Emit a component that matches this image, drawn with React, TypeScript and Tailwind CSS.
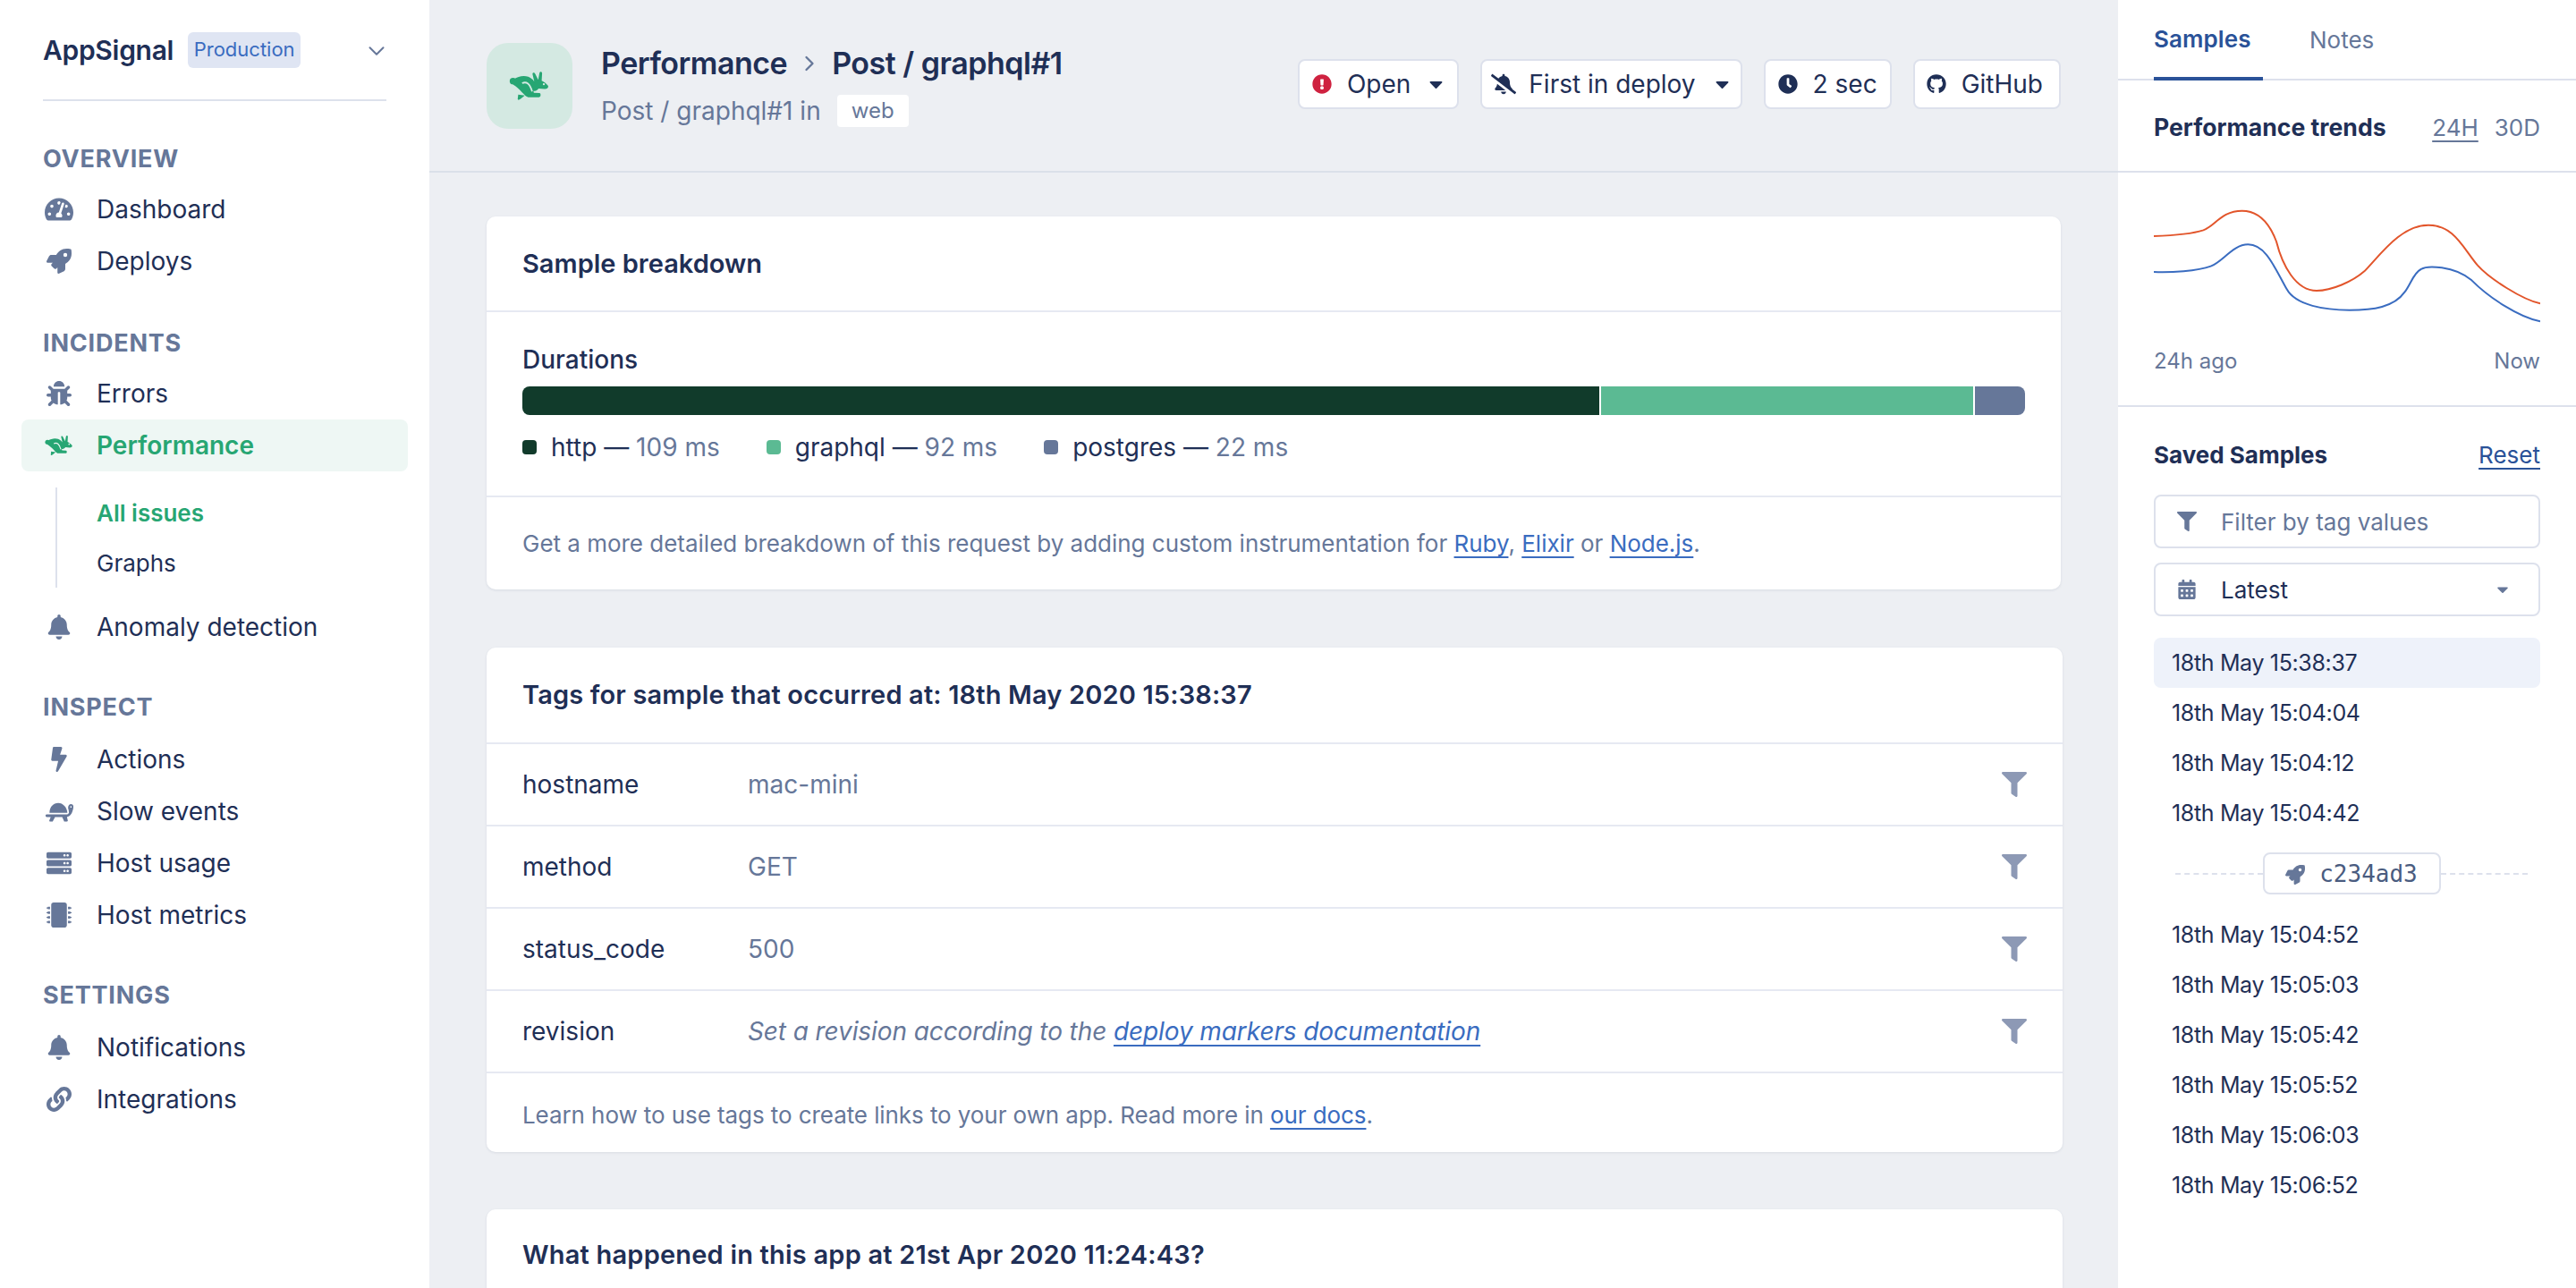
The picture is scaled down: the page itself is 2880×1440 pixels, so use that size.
import type { ReactNode } from "react";
import {
  FaBell,
  FaBellSlash,
  FaBolt,
  FaBug,
  FaCalendarAlt,
  FaCaretDown,
  FaClock,
  FaExclamationCircle,
  FaFilter,
  FaGithub,
  FaLink,
  FaMicrochip,
  FaRocket,
  FaServer,
  FaTachometerAlt,
} from "react-icons/fa";
import { FiChevronDown, FiChevronRight } from "react-icons/fi";

function RabbitIcon({ className, slit }: { className: string; slit: string }) {
  return (
    <svg viewBox="9 11 47 35" className={className} fill="currentColor">
      <circle cx="13.5" cy="23" r="3.8" />
      <path d="M15 20.5C19 17.5 26 16 31 18C34 19 36 21 38 23.5L36 15C35.700 13 38 12.500 39 14.500L42.500 21.500L44 13.500C44.500 11.500 47 12 47 14L46.500 22.500C49 24 52 25.500 54 28.500C54.500 30.500 53 32 50 32L43 31.500C41.500 33.500 39.500 34.500 37 34.500L37.500 36.500L44 36.800C45.800 37 45.800 41.500 43.500 41.500L31 41.500C28.500 41.500 25 37 21 33C18 30 15 28 13 26.500Z" />
      <path d="M19.500 38.500L27 39.500C25 41 23 43 20.500 44.500C19.500 45 18.500 44 19 43Z" />
      <path
        d="M24 25.500C29 23 33 26 35.500 35"
        fill="none"
        stroke={slit}
        strokeWidth="1.800"
      />
      <circle cx="49" cy="26.500" r="1.200" fill={slit} />
    </svg>
  );
}

function TurtleIcon({ className }: { className: string }) {
  return (
    <svg viewBox="2 3 36 26" className={className} fill="currentColor">
      <path d="M8 18C8 10 13 5.500 19 5.500C25 5.500 30 11 30.500 18Z" />
      <path d="M3 21.500C3 20.500 4 20 5 20H29C30.500 20 32 19.500 32.500 18L32 14C30.500 11 32 7 35 7C37.500 7 38.500 9 38 11.500C37.500 15 36 20 33 22C31.500 23 30.500 23.200 30 23.200L31 27.500C31.200 28.500 30.500 28.800 30 28.800H26.500L24 23.200H15L12 28.800H8.500C8 28.800 7.500 28.300 7.800 27.500L9.500 23.200H5C4 23.200 3 22.500 3 21.500Z" />
      <circle cx="35" cy="10.500" r="1" fill="#ffffff" />
    </svg>
  );
}

type NavItem = {
  label: string;
  icon: ReactNode;
};

function NavRow({ item }: { item: NavItem }) {
  return (
    <div className="flex h-[58px] items-center gap-[26px] pl-[26px] text-[#667799]">
      <span className="flex w-8 justify-center">{item.icon}</span>
      <span className="text-[28px] text-[#1f2f56]">{item.label}</span>
    </div>
  );
}

function SectionTitle({ children, className }: { children: ReactNode; className: string }) {
  return (
    <h3 className={`h-10 px-6 text-[27px] leading-10 font-bold tracking-[0.8px] text-[#667799] uppercase ${className}`}>
      {children}
    </h3>
  );
}

function Sidebar() {
  return (
    <aside className="w-[480px] shrink-0 bg-white px-6">
      <div className="mx-6 flex h-[113px] items-center border-b-2 border-[#dde1ec]">
        <span className="mt-0.5 text-[30px] font-semibold tracking-[-0.3px] text-[#1f2f56]">
          AppSignal
        </span>
        <span className="ml-4 flex h-10 w-[126px] items-center justify-center rounded-md bg-[#dfe5f3] text-[22px] text-[#3a6cc0]">
          Production
        </span>
        <FiChevronDown className="mt-0.5 -mr-1 ml-auto h-[30px] w-[30px] text-[#667799]" strokeWidth={1.600} />
      </div>

      <div className="mt-[45px]">
        <SectionTitle className="mb-[7px]">Overview</SectionTitle>
        <NavRow item={{ label: "Dashboard", icon: <FaTachometerAlt className="h-8 w-8" /> }} />
        <NavRow item={{ label: "Deploys", icon: <FaRocket className="h-[28px] w-[28px]" /> }} />
      </div>

      <div className="mt-[43px]">
        <SectionTitle className="mb-[7px]">Incidents</SectionTitle>
        <NavRow item={{ label: "Errors", icon: <FaBug className="h-[28px] w-[28px]" /> }} />
        <div className="flex h-[58px] items-center gap-[26px] rounded-lg bg-[#eef7f4] pl-[26px]">
          <RabbitIcon className="h-6 w-8 text-[#27a673]" slit="#eef7f4" />
          <span className="text-[28px] font-semibold text-[#27a673]">Performance</span>
        </div>
        <div className="mt-[18px] ml-[38px] border-l-2 border-[#dde1ec] pl-[44px]">
          <div className="flex h-14 items-center text-[26px] font-semibold text-[#27a673]">All issues</div>
          <div className="flex h-14 items-center text-[26px] text-[#1f2f56]">Graphs</div>
        </div>
        <div className="mt-[15px]">
          <NavRow item={{ label: "Anomaly detection", icon: <FaBell className="h-[28px] w-[28px]" /> }} />
        </div>
      </div>

      <div className="mt-[41px]">
        <SectionTitle className="mb-[9px]">Inspect</SectionTitle>
        <NavRow item={{ label: "Actions", icon: <FaBolt className="h-[28px] w-[28px]" /> }} />
        <NavRow item={{ label: "Slow events", icon: <TurtleIcon className="h-6 w-8" /> }} />
        <NavRow item={{ label: "Host usage", icon: <FaServer className="h-[28px] w-[28px]" /> }} />
        <NavRow item={{ label: "Host metrics", icon: <FaMicrochip className="h-[28px] w-[28px]" /> }} />
      </div>

      <div className="mt-[41px]">
        <SectionTitle className="mb-[9px]">Settings</SectionTitle>
        <NavRow item={{ label: "Notifications", icon: <FaBell className="h-[28px] w-[28px]" /> }} />
        <NavRow item={{ label: "Integrations", icon: <FaLink className="h-[28px] w-[28px]" /> }} />
      </div>
    </aside>
  );
}

function HeaderButton({ children, className }: { children: ReactNode; className: string }) {
  return (
    <div className={`flex h-14 items-center rounded-lg border-2 border-[#dde1ec] bg-white text-[28px] text-[#1f2f56] ${className}`}>
      {children}
    </div>
  );
}

function TextLink({ children }: { children: ReactNode }) {
  return (
    <a className="text-[#3a6cc0] underline decoration-2 underline-offset-[5px] [text-decoration-skip-ink:none]">
      {children}
    </a>
  );
}

function PageHeader() {
  return (
    <header className="flex h-[193px] items-center justify-between border-b-2 border-[#dbe0e9] px-16">
      <div className="flex items-center gap-8">
        <div className="flex h-24 w-24 items-center justify-center rounded-[24px] bg-[#d4e9e2]">
          <RabbitIcon className="h-[34px] w-[46px] text-[#27a673]" slit="#d4e9e2" />
        </div>
        <div>
          <div className="flex items-center text-[34px] leading-[48px] font-semibold tracking-[-0.5px] text-[#1f2f56]">
            Performance
            <FiChevronRight className="mx-[11px] h-7 w-7 text-[#667799]" strokeWidth={2} />
            Post / graphql#1
          </div>
          <div className="mt-2 flex items-center text-[28px] text-[#667799]">
            Post / graphql#1 in
            <span className="ml-[18px] flex h-9 w-20 items-center justify-center rounded bg-white text-[24px]">
              web
            </span>
          </div>
        </div>
      </div>
      <div className="mb-[3px] flex gap-6">
        <HeaderButton className="gap-[17px] pr-4 pl-[14px]">
          <FaExclamationCircle className="h-[22px] w-[22px] text-[#cf2240]" />
          Open
          <FaCaretDown className="ml-1 h-6 w-[15px]" />
        </HeaderButton>
        <HeaderButton className="gap-[14px] pr-[13px] pl-[10px]">
          <FaBellSlash className="h-7 w-7" />
          First in deploy
          <FaCaretDown className="ml-2 h-6 w-[15px]" />
        </HeaderButton>
        <HeaderButton className="gap-[17px] pr-[14px] pl-[14px]">
          <FaClock className="h-[22px] w-[22px]" />
          2 sec
        </HeaderButton>
        <HeaderButton className="gap-[17px] pr-[18px] pl-[13px]">
          <FaGithub className="h-[22px] w-[22px]" />
          GitHub
        </HeaderButton>
      </div>
    </header>
  );
}

const durations = [
  { name: "http", time: "109 ms", color: "bg-[#113b2b]" },
  { name: "graphql", time: "92 ms", color: "bg-[#5bba93]" },
  { name: "postgres", time: "22 ms", color: "bg-[#667799]" },
];

function SampleBreakdown() {
  return (
    <section className="w-[1760px] rounded-[10px] bg-white shadow-[0_1px_3px_rgba(31,47,86,0.1)]">
      <div className="flex h-[107px] items-center border-b-2 border-[#e6e9f2] px-10 text-[29px] font-semibold text-[#1f2f56]">
        Sample breakdown
      </div>
      <div className="h-[207px] border-b-2 border-[#e6e9f2] px-10 pt-[35px]">
        <div className="text-[28px] leading-9 font-medium text-[#1f2f56]">Durations</div>
        <div className="mt-3 flex h-8 gap-0.5 overflow-hidden rounded-lg">
          <div className="w-[1204px] bg-[#113b2b]"></div>
          <div className="w-[416px] bg-[#5bba93]"></div>
          <div className="flex-1 bg-[#667799]"></div>
        </div>
        <div className="mt-[18px] flex gap-[52px] text-[28px] leading-9">
          {durations.map((d) => (
            <div key={d.name} className="flex items-center">
              <span className={`mr-4 h-4 w-4 rounded ${d.color}`}></span>
              <span className="text-[#1f2f56]">{d.name} —&nbsp;</span>
              <span className="text-[#667799]">{d.time}</span>
            </div>
          ))}
        </div>
      </div>
      <div className="flex h-[103px] items-center px-10 text-[26px] tracking-[-0.015px] text-[#667799]">
        <p>
          Get a more detailed breakdown of this request by adding custom instrumentation for{" "}
          <TextLink>Ruby</TextLink>, <TextLink>Elixir</TextLink> or <TextLink>Node.js</TextLink>.
        </p>
      </div>
    </section>
  );
}

const tags = [
  { key: "hostname", value: "mac-mini" },
  { key: "method", value: "GET" },
  { key: "status_code", value: "500" },
];

function TagRow({ name, children }: { name: string; children: ReactNode }) {
  return (
    <div className="flex h-[92px] items-center border-b-2 border-[#e6e9f2] pr-[40px] pl-10 text-[28px]">
      <span className="w-[252px] text-[#1f2f56]">{name}</span>
      <div className="flex-1 text-[#667799]">{children}</div>
      <FaFilter className="h-[28px] w-[28px] text-[#8d99b5]" />
    </div>
  );
}

function TagsCard() {
  return (
    <section className="mt-[65px] w-[1762px] rounded-[10px] bg-white shadow-[0_1px_3px_rgba(31,47,86,0.1)]">
      <div className="flex h-[108px] items-center border-b-2 border-[#e6e9f2] px-10 text-[29px] font-semibold tracking-[0.15px] text-[#1f2f56]">
        Tags for sample that occurred at: 18th May 2020 15:38:37
      </div>
      {tags.map((t) => (
        <TagRow key={t.key} name={t.key}>
          {t.value}
        </TagRow>
      ))}
      <TagRow name="revision">
        <span className="tracking-[-0.1px] italic">
          Set a revision according to the <TextLink>deploy markers documentation</TextLink>
        </span>
      </TagRow>
      <div className="flex h-[88px] items-center px-10 pt-1 text-[26px] tracking-[-0.08px] text-[#667799]">
        <p>
          Learn how to use tags to create links to your own app. Read more in <TextLink>our docs</TextLink>.
        </p>
      </div>
    </section>
  );
}

function TrendChart() {
  return (
    <svg viewBox="144 660 1296 450" className="h-[150px] w-[432px]" fill="none" strokeWidth="6">
      <path
        stroke="#e2552b"
        d="M144 792C200 790 270 785 310 772C350 758 370 707 440 707C510 707 540 770 555 810C575 890 620 975 690 975C740 975 810 945 850 910C900 860 970 755 1065 755C1150 755 1180 830 1230 890C1270 935 1380 1005 1440 1018"
      />
      <path
        stroke="#3a6cc0"
        d="M144 912C200 914 290 910 335 893C375 878 410 820 460 820C520 820 550 900 590 970C620 1025 720 1040 800 1040C880 1040 950 1030 985 980C1005 955 1015 915 1040 903C1060 890 1150 890 1210 940C1270 1000 1370 1065 1440 1078"
      />
    </svg>
  );
}

const samplesBefore = ["18th May 15:38:37", "18th May 15:04:04", "18th May 15:04:12", "18th May 15:04:42"];
const samplesAfter = [
  "18th May 15:04:52",
  "18th May 15:05:03",
  "18th May 15:05:42",
  "18th May 15:05:52",
  "18th May 15:06:03",
  "18th May 15:06:52",
];

function SampleRow({ label, active }: { label: string; active?: boolean }) {
  return (
    <div
      className={`flex h-14 items-center rounded-lg px-5 pt-0.5 text-[25px] tracking-[-0.35px] text-[#1f2f56] ${
        active ? "bg-[#eef2fa]" : ""
      }`}
    >
      {label}
    </div>
  );
}

function RightPanel() {
  return (
    <aside className="w-[512px] shrink-0 bg-white">
      <div className="flex h-[90px] gap-[52px] border-b-2 border-[#dde1ec] px-10 text-[26px]">
        <div className="-mb-0.5 flex h-[90px] w-[122px] items-center border-b-4 border-[#2a5298] font-semibold tracking-[0.1px] text-[#2a5298]">
          Samples
        </div>
        <div className="flex items-center text-[#667799]">Notes</div>
      </div>
      <div className="flex h-[103px] items-center border-b-2 border-[#dde1ec] px-10 pt-1 text-[26px]">
        <span className="text-[26.6px] font-bold text-[#1f2f56]">Performance trends</span>
        <span className="ml-auto text-[#667799] underline decoration-2 underline-offset-[5px]">24H</span>
        <span className="ml-[18px] text-[#667799]">30D</span>
      </div>
      <div className="h-[262px] border-b-2 border-[#dde1ec] px-10 pt-[27px]">
        <TrendChart />
        <div className="mt-[16px] flex justify-between text-[24px] leading-9 text-[#667799]">
          <span>24h ago</span>
          <span>Now</span>
        </div>
      </div>
      <div className="px-10 pt-[35px]">
        <div className="flex h-9 items-center justify-between text-[26px]">
          <span className="font-bold text-[#1f2f56]">Saved Samples</span>
          <a className="text-[#2a5298] underline decoration-2 underline-offset-[5px]">Reset</a>
        </div>
        <div className="mt-[27px] flex h-[60px] items-center rounded-lg border-2 border-[#dde1ec] pl-6 text-[26px] text-[#667799]">
          <FaFilter className="h-[22px] w-[22px]" />
          <span className="ml-[27px]">Filter by tag values</span>
        </div>
        <div className="mt-4 flex h-[60px] items-center rounded-lg border-2 border-[#dde1ec] pr-[30px] pl-6 text-[26px] text-[#1f2f56]">
          <FaCalendarAlt className="h-[22px] w-[22px] text-[#667799]" />
          <span className="ml-[27px]">Latest</span>
          <FaCaretDown className="ml-auto h-5 w-5 text-[#667799]" />
        </div>
        <div className="mt-6">
          {samplesBefore.map((s, i) => (
            <SampleRow key={s} label={s} active={i === 0} />
          ))}
        </div>
        <div className="mt-4 mr-[14px] ml-6 flex items-center">
          <div className="flex-1 border-t-2 border-dashed border-[#dde1ec]"></div>
          <div className="flex h-[47px] w-[199px] items-center justify-center gap-[16px] rounded-lg border-2 border-[#dde1ec] pt-0.5 font-['DejaVu_Sans_Mono',monospace] text-[26px] text-[#4a5c80]">
            <FaRocket className="h-[22px] w-[22px] text-[#667799]" />
            c234ad3
          </div>
          <div className="flex-1 border-t-2 border-dashed border-[#dde1ec]"></div>
        </div>
        <div className="mt-[17px]">
          {samplesAfter.map((s) => (
            <SampleRow key={s} label={s} />
          ))}
        </div>
      </div>
    </aside>
  );
}

export default function App() {
  return (
    <div className="flex h-[1440px] overflow-hidden bg-[#edeff3] font-['Inter',sans-serif]">
      <Sidebar />
      <main className="min-w-0 flex-1">
        <PageHeader />
        <div className="px-16 pt-[49px]">
          <SampleBreakdown />
          <TagsCard />
          <section className="mt-16 h-[200px] w-[1762px] rounded-[10px] bg-white px-10 pt-[33px] text-[29px] leading-9 font-semibold tracking-[0.2px] text-[#1f2f56] shadow-[0_1px_3px_rgba(31,47,86,0.1)]">
            What happened in this app at 21st Apr 2020 11:24:43?
          </section>
        </div>
      </main>
      <RightPanel />
    </div>
  );
}
